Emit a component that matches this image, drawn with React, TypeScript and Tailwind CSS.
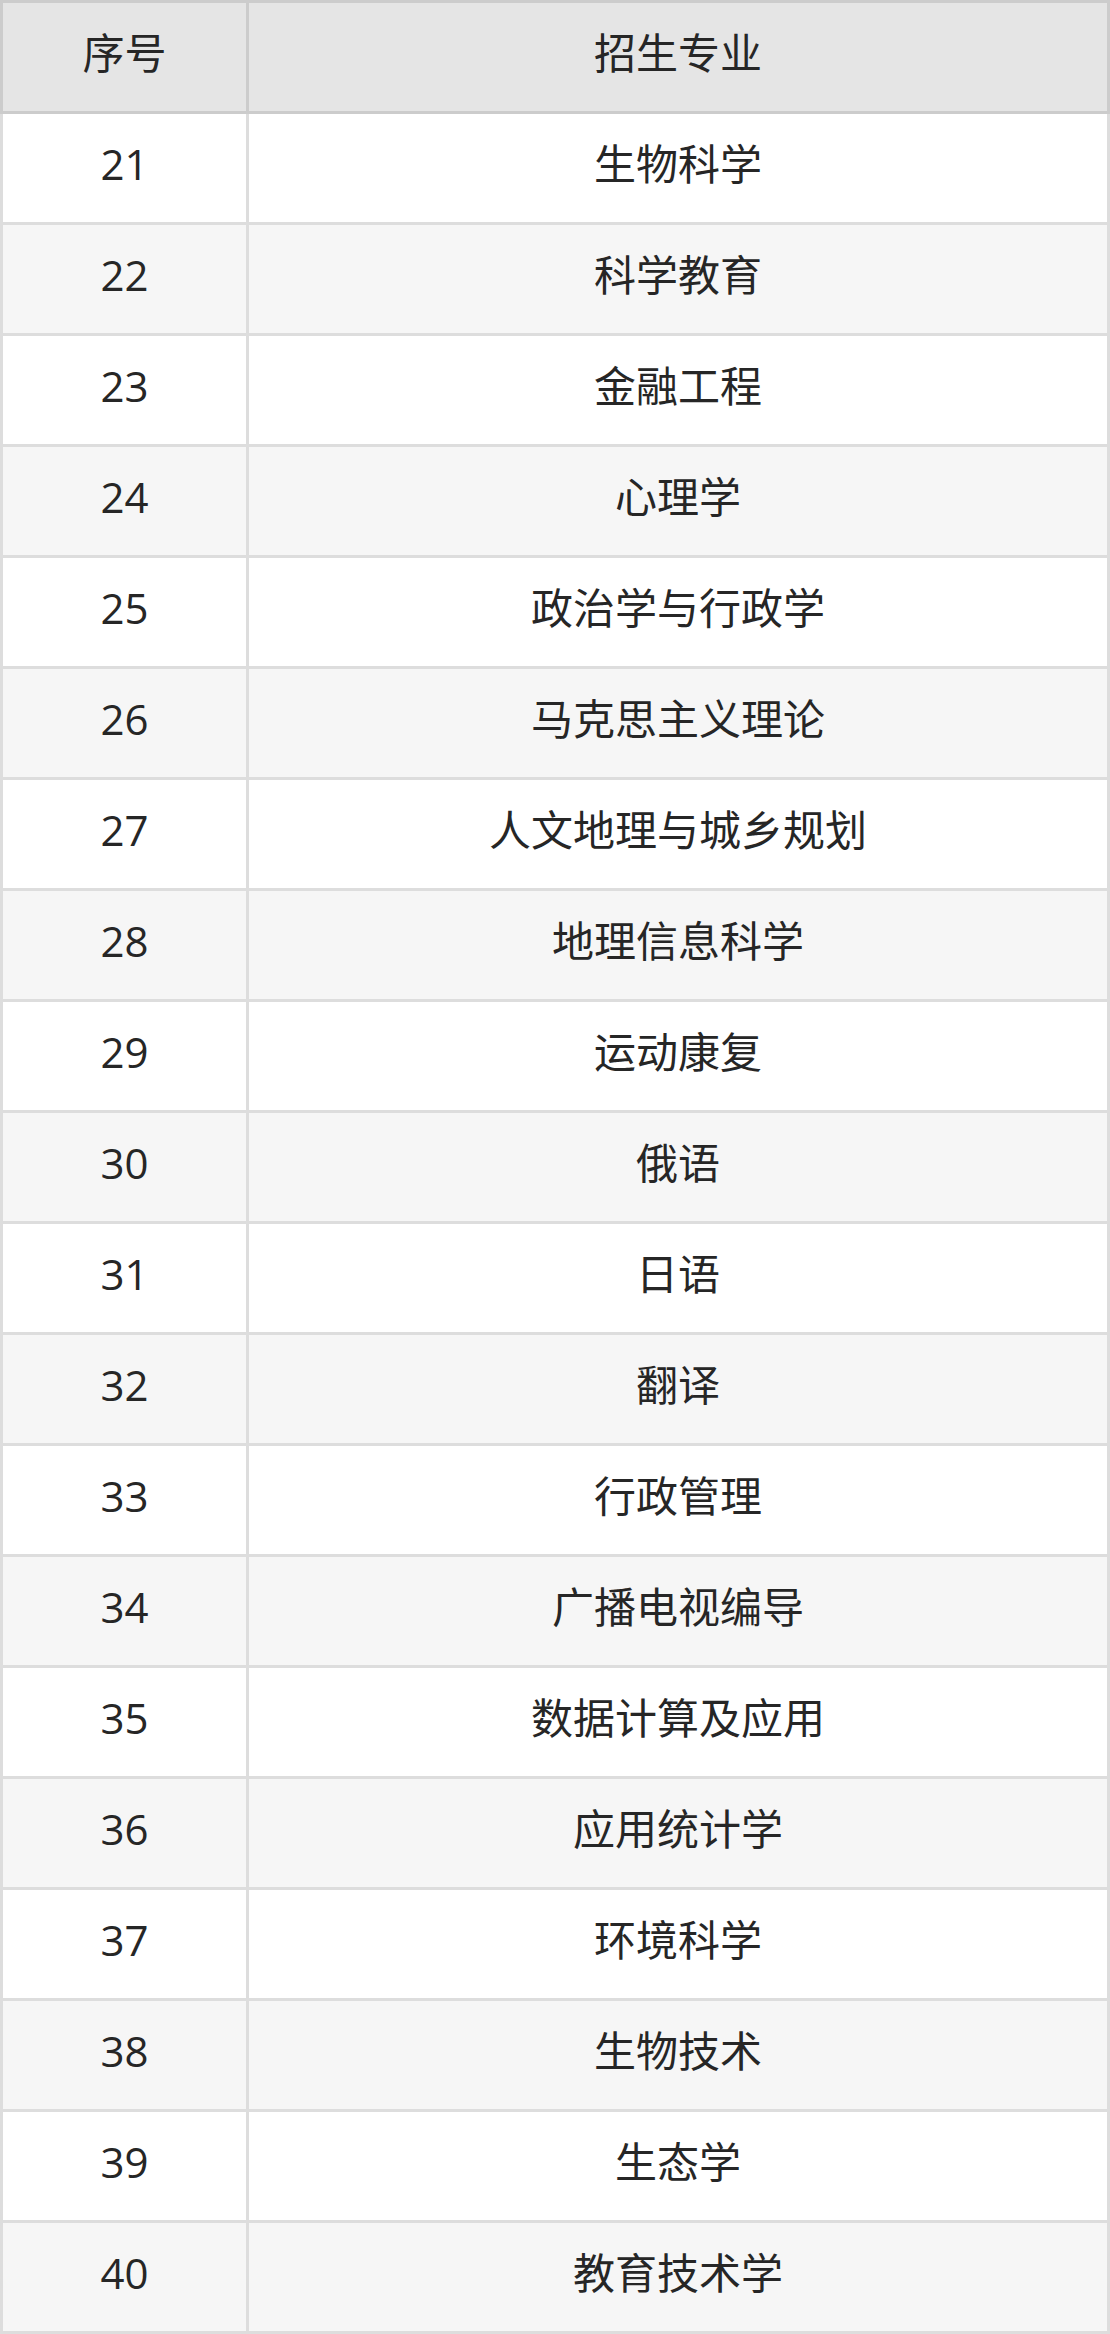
const majors = [
  "生物科学",
  "科学教育",
  "金融工程",
  "心理学",
  "政治学与行政学",
  "马克思主义理论",
  "人文地理与城乡规划",
  "地理信息科学",
  "运动康复",
  "俄语",
  "日语",
  "翻译",
  "行政管理",
  "广播电视编导",
  "数据计算及应用",
  "应用统计学",
  "环境科学",
  "生物技术",
  "生态学",
  "教育技术学",
];

export default function App() {
  return (
    <div
      className="w-[1110px] bg-white text-[42px] leading-none text-[#262626]"
      style={{ fontFamily: '"Open Sans", "Noto Sans CJK SC", sans-serif' }}
    >
      {/* header */}
      <div className="flex h-[114px] border-[3px] border-[#cccccc] bg-[#e5e5e5]">
        <div className="flex w-[246px] items-center justify-center border-r-[3px] border-[#cccccc] pb-[8px]">序号</div>
        <div className="flex flex-1 items-center justify-center pb-[8px]">招生专业</div>
      </div>
      {majors.map((name, i) => (
        <div
          key={name}
          className={
            "flex h-[111px] border-x-[3px] border-b-[3px] border-[#dddddd] " +
            (i % 2 === 1 ? "bg-[#f6f6f6]" : "bg-white")
          }
        >
          <div className="flex w-[246px] items-center justify-center border-r-[3px] border-[#dddddd] pb-[8px]">{21 + i}</div>
          <div className="flex flex-1 items-center justify-center pb-[8px]">{name}</div>
        </div>
      ))}
    </div>
  );
}
